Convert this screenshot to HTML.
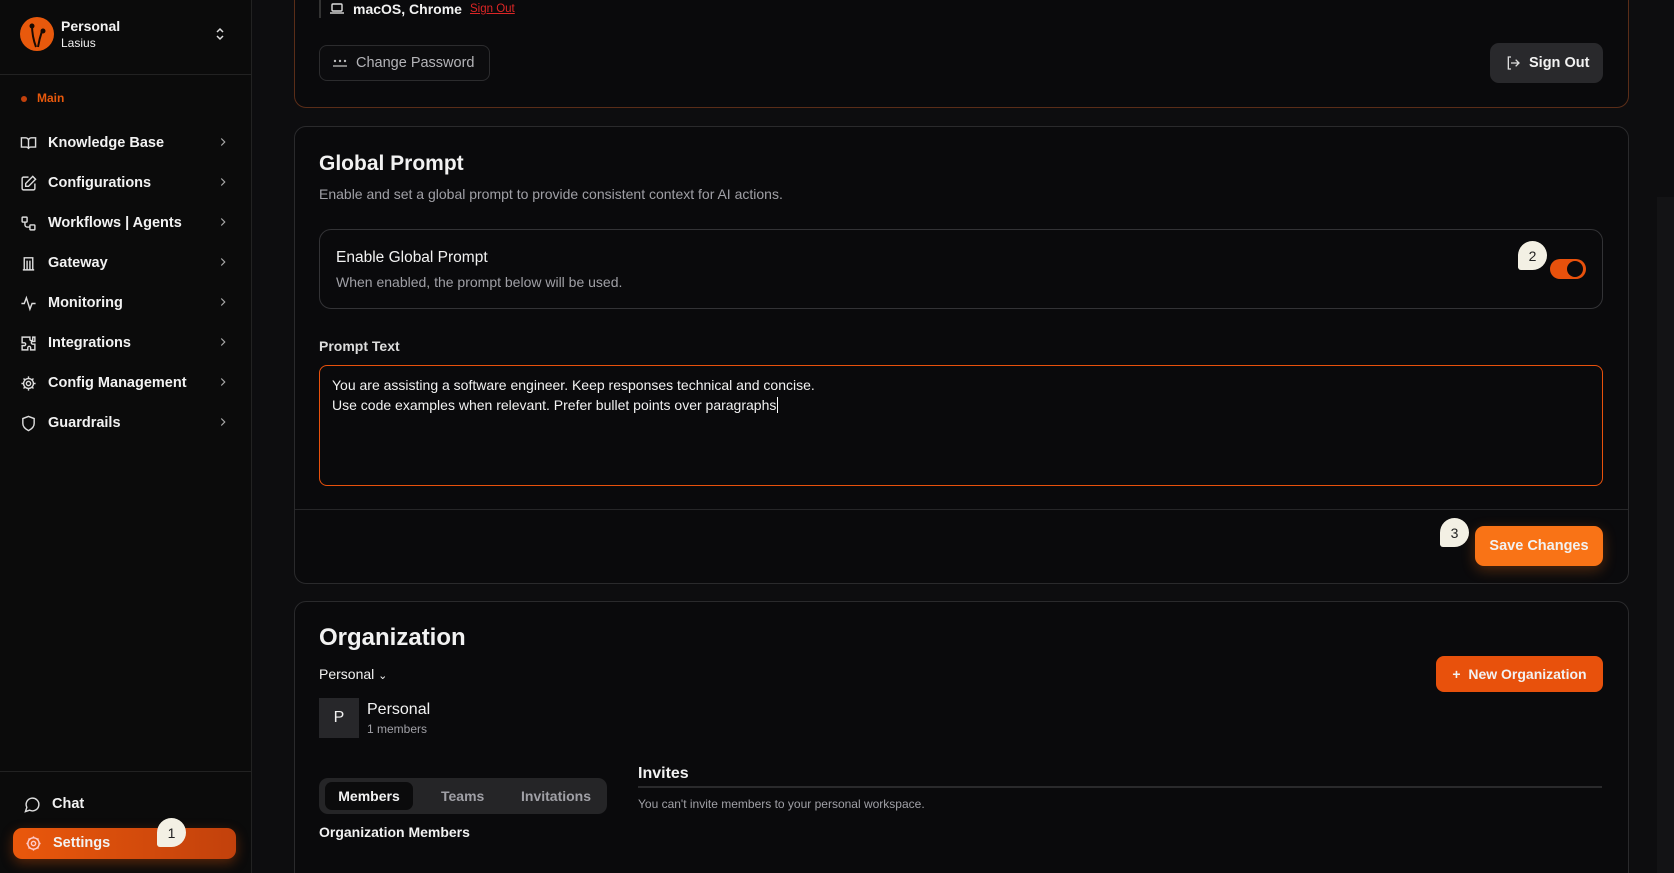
<!DOCTYPE html>
<html style="height:873px;overflow:hidden"><head><meta charset="utf-8"><style>
*{box-sizing:border-box;margin:0;padding:0}
body{width:1674px;height:873px;overflow:hidden;background:#0d0d0f;font-family:"Liberation Sans",Arial,sans-serif;color:#f2f2f2;position:relative}
.a{position:absolute}
.sb{left:0;top:0;width:252px;height:873px;background:#0b0b0b;border-right:1px solid #222}
.nav{left:20px;width:210px;height:24px;font-size:14.5px;font-weight:bold;display:flex;align-items:center}
.nav svg{width:17px;height:17px;margin-right:11px}
.nav .ch{position:absolute;right:0;top:4px;width:14px;height:14px;margin:0}
.card{background:#0a0a0c;border:1px solid #2a2a2c;border-radius:12px}
.bub{width:29px;height:29px;background:#f3f0e4;color:#222;border-radius:50% 50% 50% 10%;font-size:14px;display:flex;align-items:center;justify-content:center}
.muted{color:#a0a0a6}
</style></head><body>
<div class="a sb">
  <div class="a" style="left:20px;top:17px;width:34px;height:34px;border-radius:50%;background:#e8590c">
    <svg width="34" height="34" viewBox="0 0 34 34"><path d="M12 8 C12 16 13 22 16 30 M22 14 C20 20 19 24 18 30" stroke="#1a0a02" stroke-width="2" fill="none"/><circle cx="12" cy="9" r="2.5" fill="#1a0a02"/><circle cx="23" cy="14" r="2.5" fill="#1a0a02"/></svg>
  </div>
  <div class="a" style="left:61px;top:18px;font-size:14px;font-weight:bold">Personal</div>
  <div class="a" style="left:61px;top:36px;font-size:12px">Lasius</div>
  <svg class="a" style="left:214px;top:26px" width="12" height="16" viewBox="0 0 12 16"><path d="M3 6l3-3 3 3M3 10l3 3 3-3" stroke="#ddd" stroke-width="1.5" fill="none"/></svg>
  <div class="a" style="left:0;top:74px;width:252px;border-top:1px solid #222"></div>
  <div class="a" style="left:21px;top:96px;width:6px;height:6px;border-radius:50%;background:#c2410c"></div>
  <div class="a" style="left:37px;top:91px;font-size:12px;font-weight:bold;color:#e8590c">Main</div>
  <div class="a nav" style="top:131px"><svg viewBox="0 0 24 24" fill="none" stroke="#ddd" stroke-width="2"><path d="M2 4h6a4 4 0 0 1 4 4v12a3 3 0 0 0-3-3H2zM22 4h-6a4 4 0 0 0-4 4v12a3 3 0 0 1 3-3h7z"/></svg>Knowledge Base<svg class="ch" viewBox="0 0 24 24" fill="none" stroke="#aaa" stroke-width="2"><path d="M9 6l6 6-6 6"/></svg></div>
  <div class="a nav" style="top:171px"><svg viewBox="0 0 24 24" fill="none" stroke="#ddd" stroke-width="2"><path d="M12 3H5a2 2 0 0 0-2 2v14a2 2 0 0 0 2 2h14a2 2 0 0 0 2-2v-7M18 2l4 4-10 10H8v-4z"/></svg>Configurations<svg class="ch" viewBox="0 0 24 24" fill="none" stroke="#aaa" stroke-width="2"><path d="M9 6l6 6-6 6"/></svg></div>
  <div class="a nav" style="top:211px"><svg viewBox="0 0 24 24" fill="none" stroke="#ddd" stroke-width="2"><rect x="3" y="3" width="7" height="7" rx="1"/><rect x="14" y="14" width="7" height="7" rx="1"/><path d="M7 10v4a3 3 0 0 0 3 3h4"/></svg>Workflows | Agents<svg class="ch" viewBox="0 0 24 24" fill="none" stroke="#aaa" stroke-width="2"><path d="M9 6l6 6-6 6"/></svg></div>
  <div class="a nav" style="top:251px"><svg viewBox="0 0 24 24" fill="none" stroke="#ddd" stroke-width="2"><path d="M4 21h16M6 21V4h12v17M10 8v13M14 8v13"/></svg>Gateway<svg class="ch" viewBox="0 0 24 24" fill="none" stroke="#aaa" stroke-width="2"><path d="M9 6l6 6-6 6"/></svg></div>
  <div class="a nav" style="top:291px"><svg viewBox="0 0 24 24" fill="none" stroke="#ddd" stroke-width="2"><path d="M2 12h4l3-8 5 16 3-8h5"/></svg>Monitoring<svg class="ch" viewBox="0 0 24 24" fill="none" stroke="#aaa" stroke-width="2"><path d="M9 6l6 6-6 6"/></svg></div>
  <div class="a nav" style="top:331px"><svg viewBox="0 0 24 24" fill="none" stroke="#ddd" stroke-width="2"><path d="M9 3h5v3a2 2 0 1 0 4 0V3h3v6h-3a2 2 0 1 0 0 4h3v8h-6v-3a2 2 0 1 0-4 0v3H3v-6h3a2 2 0 1 0 0-4H3V3h6z"/></svg>Integrations<svg class="ch" viewBox="0 0 24 24" fill="none" stroke="#aaa" stroke-width="2"><path d="M9 6l6 6-6 6"/></svg></div>
  <div class="a nav" style="top:371px"><svg viewBox="0 0 24 24" fill="none" stroke="#ddd" stroke-width="2"><circle cx="12" cy="12" r="3"/><path d="M12 2v3M12 19v3M2 12h3M19 12h3M5 5l2 2M17 17l2 2M5 19l2-2M17 7l2-2"/><circle cx="12" cy="12" r="7"/></svg>Config Management<svg class="ch" viewBox="0 0 24 24" fill="none" stroke="#aaa" stroke-width="2"><path d="M9 6l6 6-6 6"/></svg></div>
  <div class="a nav" style="top:411px"><svg viewBox="0 0 24 24" fill="none" stroke="#ddd" stroke-width="2"><path d="M12 2l8 3v7c0 5-4 8-8 10-4-2-8-5-8-10V5z"/></svg>Guardrails<svg class="ch" viewBox="0 0 24 24" fill="none" stroke="#aaa" stroke-width="2"><path d="M9 6l6 6-6 6"/></svg></div>
  <div class="a" style="left:0;top:771px;width:252px;border-top:1px solid #222"></div>
  <div class="a nav" style="left:24px;top:792px"><svg viewBox="0 0 24 24" fill="none" stroke="#ddd" stroke-width="2"><path d="M7.9 20A9 9 0 1 0 4 16.1L2 22z"/></svg>Chat</div>
  <div class="a" style="left:13px;top:828px;width:223px;height:31px;border-radius:9px;background:linear-gradient(90deg,#ea580c,#c2410c);box-shadow:0 4px 12px rgba(234,88,12,.35)"></div>
  <div class="a nav" style="left:25px;top:831px"><svg viewBox="0 0 24 24" fill="none" stroke="#fcc" stroke-width="2"><circle cx="12" cy="12" r="3"/><circle cx="12" cy="12" r="8"/><path d="M12 2v2M12 20v2M2 12h2M20 12h2M5 5l1.5 1.5M17.5 17.5L19 19M5 19l1.5-1.5M17.5 6.5L19 5"/></svg>Settings</div>
  <div class="a bub" style="left:157px;top:818px">1</div>
</div>
<div class="a" style="left:1657px;top:197px;width:17px;height:676px;background:#131315"></div>

<div class="a card" style="left:294px;top:-20px;width:1335px;height:128px;border-color:#5a2d18"></div>
<div class="a" style="left:319px;top:0;width:2px;height:18px;background:#333"></div>
<svg class="a" style="left:330px;top:3px" width="14" height="12" viewBox="0 0 14 12"><rect x="2" y="1" width="10" height="7" rx="1" stroke="#ddd" stroke-width="1.4" fill="none"/><path d="M0 10h14" stroke="#ddd" stroke-width="1.4"/></svg>
<div class="a" style="left:353px;top:1px;font-size:14px;font-weight:bold">macOS, Chrome</div>
<div class="a" style="left:470px;top:3px;font-size:11.5px;color:#dc2626;text-decoration:underline">Sign Out</div>
<div class="a" style="left:319px;top:45px;width:171px;height:36px;border:1px solid #2c2c2e;border-radius:8px;background:#0c0c0e"></div>
<svg class="a" style="left:332px;top:58px" width="16" height="10" viewBox="0 0 16 10"><circle cx="3" cy="3" r="1.2" fill="#bbb"/><circle cx="8" cy="3" r="1.2" fill="#bbb"/><circle cx="13" cy="3" r="1.2" fill="#bbb"/><path d="M1 8h14" stroke="#bbb" stroke-width="1.3"/></svg>
<div class="a" style="left:356px;top:55px;font-size:14.5px;color:#b4b4b8">Change Password</div>
<div class="a" style="left:1490px;top:43px;width:113px;height:40px;border-radius:9px;background:#29292c"></div>
<svg class="a" style="left:1505px;top:55px" width="16" height="16" viewBox="0 0 24 24" fill="none" stroke="#ddd" stroke-width="2"><path d="M9 21H5V3h4M16 17l5-5-5-5M21 12H9"/></svg>
<div class="a" style="left:1529px;top:55px;font-size:14.5px;font-weight:bold">Sign Out</div>

<div class="a card" style="left:294px;top:126px;width:1335px;height:458px"></div>
<div class="a" style="left:319px;top:152px;font-size:21px;font-weight:bold">Global Prompt</div>
<div class="a muted" style="left:319px;top:186px;font-size:14px">Enable and set a global prompt to provide consistent context for AI actions.</div>
<div class="a" style="left:319px;top:229px;width:1284px;height:80px;border:1px solid #333336;border-radius:12px"></div>
<div class="a" style="left:336px;top:249px;font-size:15.5px">Enable Global Prompt</div>
<div class="a muted" style="left:336px;top:274px;font-size:14px">When enabled, the prompt below will be used.</div>
<div class="a" style="left:1550px;top:259px;width:36px;height:20px;border-radius:10px;background:#e8510c"></div>
<div class="a" style="left:1567px;top:261px;width:16px;height:16px;border-radius:50%;background:#0a0a0c"></div>
<div class="a bub" style="left:1518px;top:241px">2</div>
<div class="a" style="left:319px;top:338px;font-size:14px;font-weight:bold;color:#ddd">Prompt Text</div>
<div class="a" style="left:319px;top:365px;width:1284px;height:121px;border:1.5px solid #e8510c;border-radius:8px"></div>
<div class="a" style="left:332px;top:375px;font-size:14px;line-height:20px">You are assisting a software engineer. Keep responses technical and concise.<br>Use code examples when relevant. Prefer bullet points over paragraphs<span style="border-left:1px solid #fff;margin-left:1px"></span></div>
<div class="a" style="left:295px;top:509px;width:1333px;border-top:1px solid #262628"></div>
<div class="a" style="left:1475px;top:526px;width:128px;height:40px;border-radius:9px;background:#f97316;box-shadow:0 4px 14px rgba(249,115,22,.3);font-size:14.5px;font-weight:bold;display:flex;align-items:center;justify-content:center">Save Changes</div>
<div class="a bub" style="left:1440px;top:518px">3</div>

<div class="a card" style="left:294px;top:601px;width:1335px;height:290px"></div>
<div class="a" style="left:319px;top:624px;font-size:24px;font-weight:bold">Organization</div>
<div class="a" style="left:319px;top:666px;font-size:14px">Personal <span style="font-size:11px">&#8964;</span></div>
<div class="a" style="left:319px;top:698px;width:40px;height:40px;background:#27272a;display:flex;align-items:center;justify-content:center;font-size:16px">P</div>
<div class="a" style="left:367px;top:701px;font-size:16px">Personal</div>
<div class="a muted" style="left:367px;top:722px;font-size:12px">1 members</div>
<div class="a" style="left:1436px;top:656px;width:167px;height:36px;border-radius:8px;background:#e8510c;font-size:14px;font-weight:bold;display:flex;align-items:center;justify-content:center">+&nbsp; New Organization</div>
<div class="a" style="left:319px;top:778px;width:288px;height:36px;border-radius:9px;background:#252527"></div>
<div class="a" style="left:325px;top:782px;width:88px;height:28px;border-radius:7px;background:#0b0b0c;font-size:14px;font-weight:bold;display:flex;align-items:center;justify-content:center">Members</div>
<div class="a muted" style="left:441px;top:788px;font-size:14px;font-weight:bold">Teams</div>
<div class="a muted" style="left:521px;top:788px;font-size:14px;font-weight:bold">Invitations</div>
<div class="a" style="left:638px;top:765px;font-size:16px;font-weight:bold">Invites</div>
<div class="a" style="left:638px;top:786px;width:964px;border-top:2px solid #2a2a2c"></div>
<div class="a muted" style="left:638px;top:797px;font-size:12px">You can't invite members to your personal workspace.</div>
<div class="a" style="left:319px;top:824px;font-size:14px;font-weight:bold">Organization Members</div>
</body></html>
